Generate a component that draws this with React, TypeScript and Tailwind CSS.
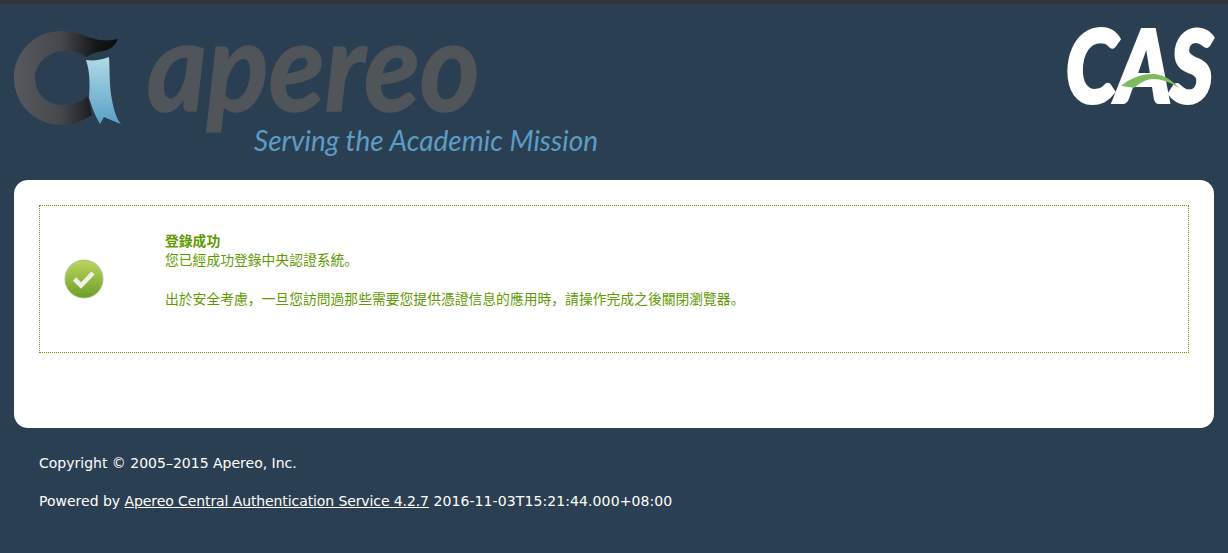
function ApereoLogo() {
  return (
    <svg width="620" height="176" viewBox="0 4 620 176" className="block shrink-0">
      <defs>
        <linearGradient id="ring" x1="14" x2="118" y1="0" y2="0" gradientUnits="userSpaceOnUse">
          <stop offset="0" stopColor="#565a5f" />
          <stop offset="0.45" stopColor="#45494d" />
          <stop offset="0.8" stopColor="#141516" />
          <stop offset="1" stopColor="#0d0d0d" />
        </linearGradient>
        <linearGradient id="ribbon" x1="0" x2="0" y1="58" y2="124" gradientUnits="userSpaceOnUse">
          <stop offset="0" stopColor="#aedae4" />
          <stop offset="1" stopColor="#5a9fc8" />
        </linearGradient>
      </defs>
      <path
        fill="url(#ring)"
        d="M60 31C75 30 88 38 100 40C107 41 113 40 118 39C115 46 110 50 103 51C97 52 92 53 87 57C80 53 72 50 63 51C47 52 35 64 35 78C35 93 47 105 62 105C72 105 81 102 88 96L92 115C82 121 72 125 62 125C35 125 14 104 14 78C14 52 34 32 60 31Z"
      />
      <path
        fill="url(#ribbon)"
        d="M86 60C93 61 101 60 109 57C110 70 109 85 112 100C114 110 116 118 121 124C115 122 109 119 104 117L100 124C95 116 92 107 89 98C90 85 90 72 86 60Z"
      />
      <text
        x="147"
        y="111"
        textLength="333"
        lengthAdjust="spacingAndGlyphs"
        fill="#505559"
        stroke="#505559"
        strokeWidth="1.5"
        fontFamily="Lato, sans-serif"
        fontStyle="italic"
        fontWeight="700"
        fontSize="124"
      >
        apereo
      </text>
      <text
        x="254"
        y="151"
        textLength="344"
        lengthAdjust="spacingAndGlyphs"
        fill="#5b9dc6"
        fontFamily="Lato, sans-serif"
        fontStyle="italic"
        fontSize="28"
      >
        Serving the Academic Mission
      </text>
    </svg>
  );
}

function CasLogo() {
  return (
    <svg width="160" height="110" viewBox="1060 4 160 110" className="block shrink-0">
      <text
        x="1066"
        y="102"
        textLength="147"
        lengthAdjust="spacingAndGlyphs"
        fill="#ffffff"
        stroke="#ffffff"
        strokeWidth="4"
        fontFamily="Lato, sans-serif"
        fontStyle="italic"
        fontWeight="900"
        fontSize="100"
      >
        CAS
      </text>
      <path fill="#7fba5c" d="M1121 86C1130 78 1142 74 1152 74C1163 74 1172 80 1179 88C1170 82 1161 79 1153 79C1146 79 1140 83 1134 88C1129 87 1125 86 1121 86Z" />
    </svg>
  );
}

function CheckIcon() {
  return (
    <svg width="40" height="40" viewBox="0 0 40 40" className="block">
      <defs>
        <linearGradient id="ok" x1="0" x2="0" y1="0" y2="1">
          <stop offset="0" stopColor="#bdd65e" />
          <stop offset="1" stopColor="#6c9e26" />
        </linearGradient>
      </defs>
      <circle cx="20" cy="20" r="19" fill="url(#ok)" stroke="#a3b88a" strokeWidth="0.8" />
      <path d="M10.5 20L17 26.5L29 14" fill="none" stroke="#eef2e6" strokeWidth="4.6" />
    </svg>
  );
}

export default function App() {
  return (
    <div className="h-[553px] overflow-hidden bg-[#2b3f52] font-['DejaVu_Sans','Noto_Sans_CJK_SC',sans-serif] text-[14px] text-white">
      <div className="h-[4px] bg-[#333538]" />
      <header className="flex h-[176px] justify-between">
        <ApereoLogo />
        <div className="mr-[8px]">
          <CasLogo />
        </div>
      </header>
      <main className="mx-[14px] h-[248px] rounded-[14px] bg-white px-[25px] pt-[25px]">
        <div className="flex h-[148px] border border-dotted border-[#5f9a00] text-[13.8px] text-[#5f9a00]">
          <div className="w-[125px] shrink-0 pl-[24px] pt-[53px]">
            <CheckIcon />
          </div>
          <div className="pt-[26px] leading-[19px]">
            <h2 className="font-bold">登錄成功</h2>
            <p>您已經成功登錄中央認證系統。</p>
            <p className="mt-[20px]">出於安全考慮，一旦您訪問過那些需要您提供憑證信息的應用時，請操作完成之後關閉瀏覽器。</p>
          </div>
        </div>
      </main>
      <footer className="px-[39px] pt-[25px] leading-[20px]">
        <p>Copyright © 2005–2015 Apereo, Inc.</p>
        <p className="mt-[18px]">
          Powered by <a href="#" className="tracking-[-0.1px] underline">Apereo Central Authentication Service 4.2.7</a>{" "}
          <span className="tracking-[0.1px]">2016-11-03T15:21:44.000+08:00</span>
        </p>
      </footer>
    </div>
  );
}
